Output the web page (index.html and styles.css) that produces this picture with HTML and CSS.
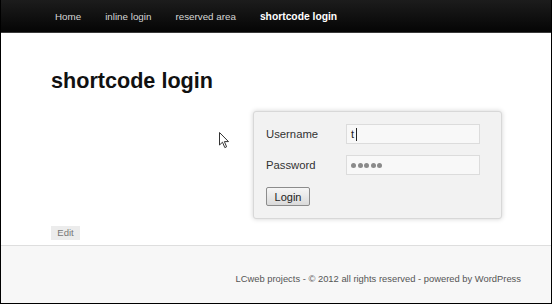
FILE: index.html
```html
<!DOCTYPE html>
<html lang="en">
<head>
    <meta charset="UTF-8">
    <meta name="viewport" content="width=device-width, initial-scale=1.0">
    <title>shortcode login</title>
    <link rel="stylesheet" href="styles.css">
</head>
<body>
    <div class="page">
        <!-- Menu -->
        <div class="nav">
            <a href="#" class="nav-link">Home</a>
            <a href="#" class="nav-link">inline login</a>
            <a href="#" class="nav-link">reserved area</a>
            <a href="#" class="nav-link active">shortcode login</a>
        </div>

        <!-- Conteudo -->
        <div class="main">
            <div class="content">
                <h1 class="title">shortcode login</h1>
                <div class="login-row">
                    <div class="login-box">
                        <div class="login-field">
                            <label class="login-label">Username</label>
                            <div class="login-input"><span>t</span><span class="caret"></span></div>
                        </div>
                        <div class="login-field">
                            <label class="login-label">Password</label>
                            <div class="login-input">
                                <span class="dot"></span><span class="dot"></span><span class="dot"></span><span class="dot"></span><span class="dot"></span>
                            </div>
                        </div>
                        <button class="login-btn">Login</button>
                    </div>
                </div>
                <a href="#" class="edit-link">Edit</a>
            </div>

            <svg class="pointer" width="11" height="17" viewBox="0 0 11 17">
                <path d="M0.5 0.5 L0.5 13 L3.5 10.2 L5.8 15.6 L7.6 14.8 L5.4 9.6 L9.5 9.6 Z" fill="#fff" stroke="#333" stroke-width="1" stroke-linejoin="round"/>
            </svg>
        </div>

        <div class="footer">LCweb projects - &copy; 2012 all rights reserved - powered by WordPress</div>
    </div>
</body>
</html>
```

FILE: styles.css
```css
body {
    margin: 0;
    padding: 0;
    font-family: 'Liberation Sans', Arial, sans-serif;
    background: #fff;
}

.page {
    height: 100vh;
    box-sizing: border-box;
    display: flex;
    flex-direction: column;
    border-left: 1px solid #000;
    border-right: 1px solid #000;
    border-bottom: 1px solid #000;
}

.nav {
    height: 33px;
    flex-shrink: 0;
    box-sizing: border-box;
    display: flex;
    align-items: center;
    gap: 24px;
    padding-left: 54px;
    background: linear-gradient(#1c1c1c, #050505);
    border-bottom: 1px solid #3a3a3a;
}

.nav-link {
    color: #d6d6d6;
    font-size: 9.8px;
    text-decoration: none;
}

.nav-link.active {
    color: #fff;
    font-weight: bold;
    font-size: 10.3px;
}

.main {
    flex: 1;
    position: relative;
}

.content {
    width: 451px;
    margin-left: 50px;
    padding-top: 35px;
}

.title {
    margin: 0;
    font-size: 21.6px;
    line-height: 25px;
    font-weight: bold;
    color: #111;
}

.login-row {
    display: flex;
    justify-content: flex-end;
    margin-top: 18px;
}

.login-box {
    width: 249px;
    box-sizing: border-box;
    padding: 12px;
    background: #f2f2f2;
    border: 1px solid #d8d8d8;
    border-radius: 3px;
    box-shadow: 0 0 5px rgba(0, 0, 0, 0.18);
    display: flex;
    flex-direction: column;
    align-items: flex-start;
    gap: 11px;
}

.login-field {
    display: flex;
    align-items: center;
}

.login-label {
    width: 80px;
    font-size: 11.3px;
    color: #333;
}

.login-input {
    width: 134px;
    height: 20px;
    box-sizing: border-box;
    background: #f8f8f8;
    border: 1px solid #dcdcdc;
    display: flex;
    align-items: center;
    gap: 1.6px;
    padding-left: 4px;
    font-size: 11px;
    color: #222;
}

.caret {
    width: 1px;
    height: 13px;
    background: #222;
}

.dot {
    width: 5px;
    height: 5px;
    border-radius: 50%;
    background: #8a8a8a;
}

.login-btn {
    margin-top: 1px;
    width: 44px;
    height: 19px;
    padding: 0;
    font-family: inherit;
    font-size: 11px;
    color: #222;
    background: linear-gradient(#f6f6f6, #dadada);
    border: 1px solid #8c8c8c;
    border-radius: 2px;
}

.edit-link {
    display: inline-block;
    margin-top: 7px;
    width: 29px;
    height: 14px;
    line-height: 14px;
    text-align: center;
    background: #ececec;
    color: #777;
    font-size: 9.5px;
    text-decoration: none;
}

.pointer {
    position: absolute;
    left: 218px;
    top: 99px;
}

.footer {
    height: 58px;
    flex-shrink: 0;
    box-sizing: border-box;
    border-top: 1px solid #dedede;
    background: #f7f7f7;
    text-align: right;
    padding: 27px 30px 0 0;
    font-size: 9.4px;
    color: #555;
}
```
